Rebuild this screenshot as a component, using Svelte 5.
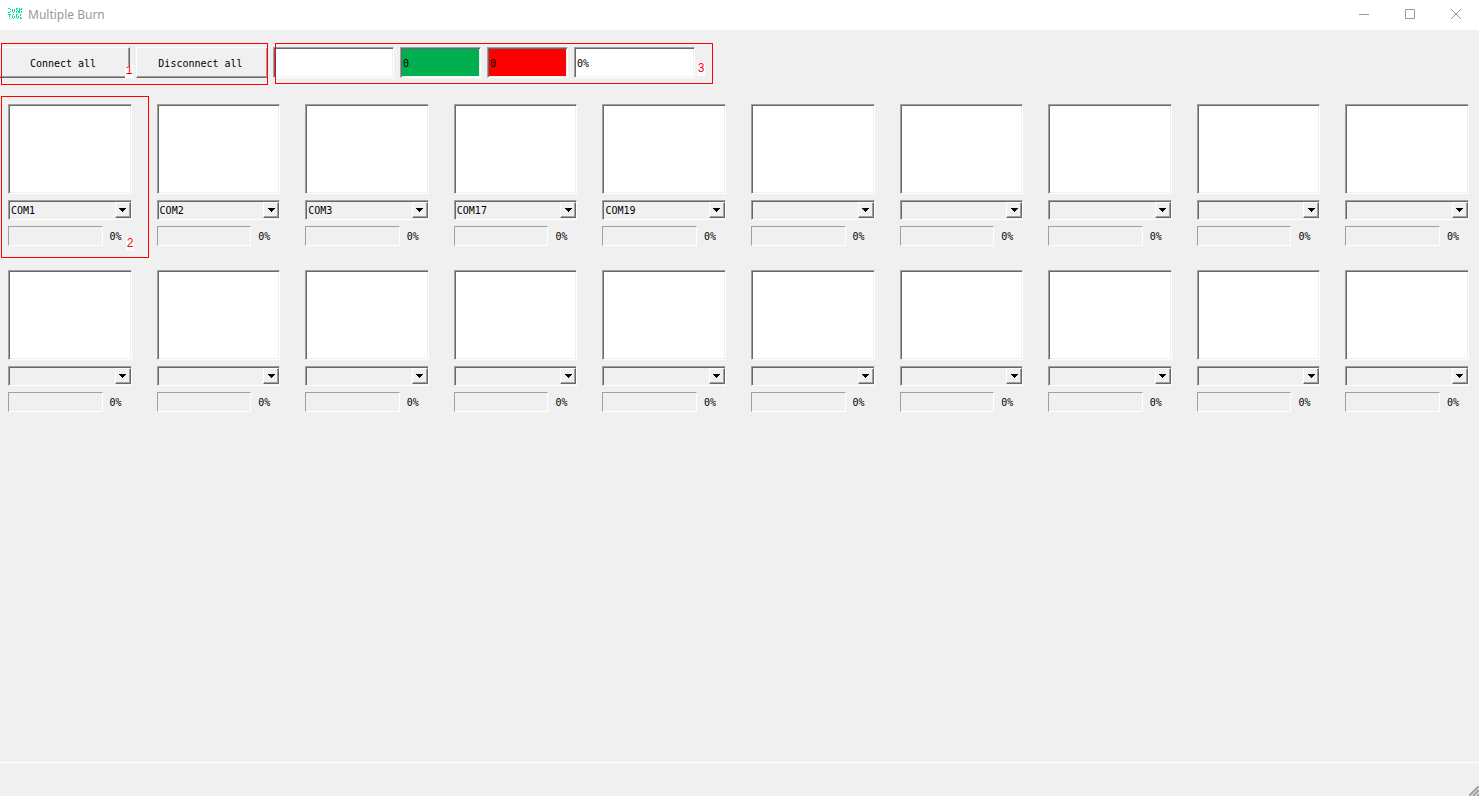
<script>
  const ports = ['COM1', 'COM2', 'COM3', 'COM17', 'COM19'];
  const slots = Array.from({ length: 20 }, (_, i) => ({
    id: i + 1,
    port: ports[i] ?? '',
    progress: 0
  }));
</script>

<div class="window">
  <header class="titlebar">
    <svg class="logo" width="14" height="12" viewBox="0 0 14 12" shape-rendering="crispEdges" aria-hidden="true">
      <path
        d="M0 .5h2M2.5 1v1M2.5 3v1M0 4.5h2M4.5 1v3M5 4.5h1M6.5 1v3M8.5 0v2M8.5 3v2M9 .5h1M9 2.5h1M10.5 3v2M11.5 0v5M12.5 1v1M13.5 0v2M13.5 3v2M0 6.5h3M1.5 7v2M1.5 10v1M4.5 7v3M5 6.5h1M5 10.5h1M6.5 8v2M8.5 7v3M8 6.5h2M9 10.5h1M10.5 8v2M12.5 6v2M12.5 9v1M12 10.5h2"
        fill="none" stroke="#08e68c" />
    </svg>
    <h1>Multiple Burn</h1>
    <div class="window-controls">
      <button type="button" aria-label="Minimize">
        <svg width="12" height="12" viewBox="0 0 12 12"><path d="M1 6.5h10" /></svg>
      </button>
      <button type="button" aria-label="Maximize">
        <svg width="12" height="12" viewBox="0 0 12 12"><path d="M1.5 1.5h9v9h-9z" /></svg>
      </button>
      <button type="button" aria-label="Close">
        <svg width="12" height="12" viewBox="0 0 12 12"><path d="M1 1l10 10M11 1L1 11" /></svg>
      </button>
    </div>
  </header>

  <div class="toolbar">
    <div class="actions">
      <button type="button" class="push first">Connect all</button>
      <button type="button" class="push">Disconnect all</button>
      <div class="frame frame-actions"></div>
      <span class="mark mark-1">1</span>
    </div>
    <div class="totals">
      <input class="field wide" aria-label="Total" />
      <input class="field pass" aria-label="Passed" value="0" />
      <input class="field fail" aria-label="Failed" value="0" />
      <input class="field wide" aria-label="Pass rate" value="0%" />
      <div class="frame frame-totals"></div>
      <span class="mark mark-3">3</span>
    </div>
  </div>

  <main class="slots">
    {#each slots as slot (slot.id)}
      <section class="slot">
        <textarea aria-label="Log {slot.id}"></textarea>
        <div class="combo">
          <select aria-label="Port {slot.id}">
            <option>{slot.port}</option>
          </select>
          <span class="drop">
            <svg width="7" height="4" viewBox="0 0 7 4" shape-rendering="crispEdges" aria-hidden="true">
              <path d="M0 0h7v1H6v1H5v1H4v1H3V3H2V2H1V1H0z" />
            </svg>
          </span>
        </div>
        <div class="status">
          <progress id="progress-{slot.id}" max="100" value={slot.progress}></progress>
          <label for="progress-{slot.id}">{slot.progress}%</label>
        </div>
        {#if slot.id === 1}
          <div class="frame frame-slot"></div>
          <span class="mark mark-2">2</span>
        {/if}
      </section>
    {/each}
  </main>

  <footer class="statusbar">
    <svg width="10" height="10" viewBox="0 0 10 10" aria-hidden="true">
      <path d="M0 10L10 0M4 10l6-6M8 10l2-2" fill="none" stroke="#a0a0a0" stroke-width="2" />
    </svg>
  </footer>
</div>

<style>
  :global(body) {
    margin: 0;
    background: #f0f0f0;
  }

  .window {
    display: flex;
    flex-direction: column;
    min-height: 100vh;
    overflow: hidden;
    color: #000;
    font: 10px/12px 'DejaVu Sans Mono', monospace;
  }

  button,
  input,
  select,
  textarea {
    box-sizing: border-box;
    margin: 0;
    border-radius: 0;
    color: inherit;
    font: inherit;
    outline: none;
  }

  .titlebar {
    display: flex;
    align-items: center;
    height: 30px;
    padding-left: 8px;
    background: #fff;
  }

  .logo {
    margin: 0 6px 2px 0;
  }

  h1 {
    margin: 0;
    color: #999;
    font: 400 12px/18px 'Noto Sans', sans-serif;
  }

  .window-controls {
    display: flex;
    margin-left: auto;
  }

  .window-controls button {
    display: grid;
    place-items: center;
    width: 46px;
    height: 30px;
    padding: 0 0 2px;
    border: 0;
    background: none;
  }

  .window-controls path {
    fill: none;
    stroke: #999;
  }

  .toolbar {
    display: flex;
    gap: 5px;
    padding-top: 17px;
  }

  .actions,
  .totals {
    position: relative;
    display: flex;
    gap: 6px;
  }

  .push {
    width: 132px;
    height: 31px;
    padding: 2px 3px 0 0;
    border: 1px solid;
    border-color: #fff #696969 #696969 #fff;
    background: #f0f0f0;
    box-shadow: inset -1px -1px #a0a0a0;
  }

  .push.first {
    width: 130px;
    border-left-width: 0;
  }

  .field,
  textarea,
  select {
    border: 1px solid;
    border-color: #a0a0a0 #fff #fff #a0a0a0;
    background: #fff;
    box-shadow:
      inset 1px 1px #696969,
      inset -1px -1px #f0f0f0;
  }

  .field {
    width: 81px;
    height: 31px;
    padding: 2px 2px 0;
  }

  .field.wide {
    width: 121px;
  }

  .field.pass {
    background: #00b050;
  }

  .field.fail {
    background: #f00;
  }

  .slots {
    display: grid;
    grid-template-columns: repeat(10, minmax(0, 1fr));
    gap: 24px 25px;
    padding: 26px 10px 24px 8px;
  }

  .slot {
    position: relative;
    display: flex;
    flex-direction: column;
    gap: 6px;
  }

  textarea {
    width: 100%;
    height: 90px;
    padding: 3px;
    resize: none;
  }

  .combo {
    position: relative;
    display: flex;
  }

  select {
    width: 100%;
    height: 20px;
    padding: 2px 18px 0 2px;
    appearance: none;
    background: #f0f0f0;
  }

  .drop {
    position: absolute;
    top: 2px;
    right: 1px;
    display: grid;
    place-items: center;
    box-sizing: border-box;
    width: 16px;
    height: 16px;
    border: 1px solid;
    border-color: #fff #696969 #696969 #fff;
    box-shadow: inset -1px -1px #a0a0a0;
    pointer-events: none;
  }

  .status {
    display: flex;
    align-items: center;
    gap: 7px;
  }

  progress {
    flex: 1;
    min-width: 0;
    box-sizing: border-box;
    height: 20px;
    border: 1px solid;
    border-color: #a0a0a0 #fff #fff #a0a0a0;
    appearance: none;
    background: #f0f0f0;
  }

  progress::-webkit-progress-bar {
    background: #f0f0f0;
  }

  .status label {
    width: 22px;
    padding-top: 2px;
  }

  .frame,
  .mark {
    position: absolute;
    pointer-events: none;
  }

  .frame {
    border: 1px solid #f00;
  }

  .frame-actions {
    inset: -4px 0 -7px 1px;
  }

  .frame-totals {
    inset: -4px -18px -6px 2px;
  }

  .frame-slot {
    inset: -8px -17px -12px -7px;
  }

  .mark {
    width: 8px;
    background: #fff;
    color: #f00;
    font-family: 'Liberation Mono', monospace;
    font-size: 12px;
    line-height: 13px;
    text-align: center;
  }

  .mark-1 {
    left: 125px;
    top: 18px;
  }

  .mark-2 {
    left: 118px;
    bottom: -5px;
  }

  .mark-3 {
    right: -10px;
    top: 16px;
  }

  .statusbar {
    display: flex;
    align-items: flex-end;
    justify-content: flex-end;
    height: 33px;
    margin-top: auto;
    border-top: 1px solid #fff;
  }
</style>
